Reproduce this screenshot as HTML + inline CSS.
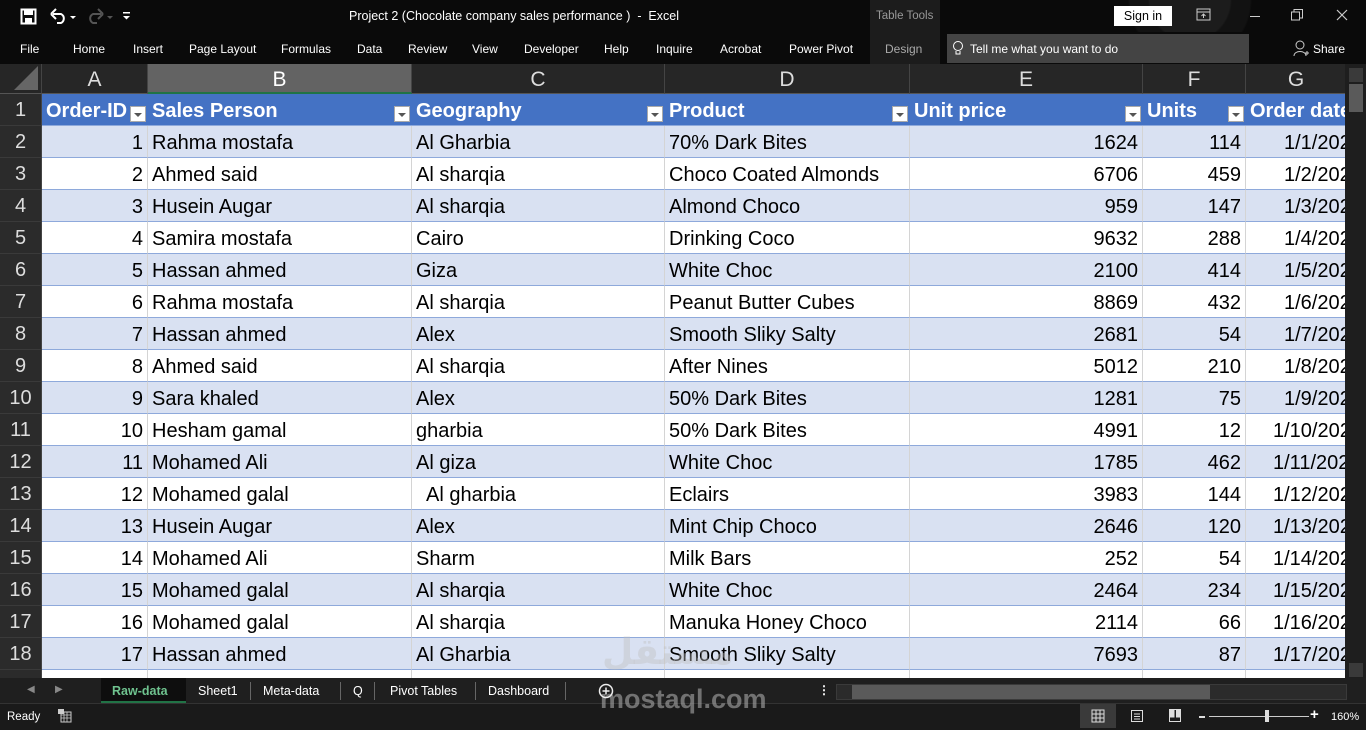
<!DOCTYPE html>
<html><head><meta charset="utf-8"><style>
*{margin:0;padding:0;box-sizing:border-box}
body{width:1366px;height:730px;overflow:hidden;background:#0a0a0a;font-family:"Liberation Sans",sans-serif;position:relative}
.a{position:absolute}
.t{color:#fff;font-size:12px;white-space:nowrap}
.row{position:absolute;left:0;height:32px;display:flex}
.row div{height:32px;padding:3px 4px 0;font-size:20px;color:#000;white-space:nowrap;overflow:hidden;border-bottom:1px solid #8ea9db;border-right:1px solid #d4d4d4;line-height:29px;position:relative;flex:none}
.row div.r{text-align:right}
.row div.rh{background:#2b2b2b!important;color:#ddd;text-align:center;border-right:1px solid #444;border-bottom:1px solid #3a3a3a;padding:2px 0 0;font-weight:normal}
.ch{top:64px;height:30px}
.ch div{background:#262626;color:#ddd;text-align:center;font-size:21px;height:30px;line-height:30px;padding:1px 0 0;border-bottom:1px solid #555;border-right:1px solid #444}
.ch div.sel{background:#636363;color:#fff;border-bottom:2px solid #217346}
.hd div{background:#4472c4;color:#fff;font-weight:bold;border-right:none}
.dd{position:absolute;right:2px;top:12px;width:16px;height:16px;background:#fff;border:1px solid #aaa}
.dd:after{content:"";position:absolute;left:3px;top:6px;border:4px solid transparent;border-top:4px solid #555}
.b div{background:#d9e1f2}
.w div{background:#fff}
.c0{width:42px}.c1{width:106px}.c2{width:264px}.c3{width:253px}.c4{width:245px}.c5{width:233px}.c6{width:103px}.c7{width:101px}
</style></head><body>
<!-- title bar -->
<div class="a" style="left:0;top:0;width:1366px;height:64px;background:#0a0a0a"></div>
<svg class="a" style="left:20px;top:8px" width="18" height="17"><rect x="1.5" y="1.5" width="14" height="14" fill="none" stroke="#fff" stroke-width="2"/><rect x="4" y="2" width="9" height="5" fill="#fff"/><rect x="5" y="10" width="7" height="5" fill="#fff"/></svg>
<svg class="a" style="left:50px;top:8px" width="30" height="17"><path d="M3 6 H11 A5 5 0 0 1 11 15 H7" fill="none" stroke="#fff" stroke-width="2"/><path d="M1 6 L6 1 M1 6 L6 11" stroke="#fff" stroke-width="2"/><path d="M20 8 h6 l-3 3z" fill="#fff"/></svg>
<svg class="a" style="left:86px;top:8px" width="30" height="17"><path d="M15 6 H7 A5 5 0 0 0 7 15 H11" fill="none" stroke="#555" stroke-width="2"/><path d="M17 6 L12 1 M17 6 L12 11" stroke="#555" stroke-width="2"/><path d="M21 8 h6 l-3 3z" fill="#555"/></svg>
<svg class="a" style="left:122px;top:10px" width="10" height="12"><rect x="1" y="2" width="7" height="1.5" fill="#fff"/><path d="M1 6 h7 l-3.5 3.5z" fill="#fff"/></svg>
<div class="a t" style="left:349px;top:9px;font-size:12.5px">Project 2 (Chocolate company sales performance )&nbsp; -&nbsp; Excel</div>
<div class="a" style="left:870px;top:0;width:70px;height:64px;background:#1c1c1c"></div>
<div class="a t" style="left:876px;top:10px;color:#999;font-size:11.5px">Table Tools</div>
<div class="a" style="left:950px;top:0;width:380px;height:32px;background:radial-gradient(circle at 240px 0px,#1c1c1c 40px,#121212 42px,#121212 60px,#0a0a0a 62px)"></div>
<div class="a" style="left:1114px;top:6px;width:58px;height:20px;background:#fff;color:#000;font-size:12.5px;text-align:center;line-height:20px">Sign in</div>
<svg class="a" style="left:1196px;top:8px" width="16" height="14"><rect x="1" y="1" width="13" height="11" fill="none" stroke="#ccc"/><path d="M1 4 h13 M7.5 10 V6 M5.5 8 l2-2 l2 2" stroke="#ccc" fill="none"/></svg>
<div class="a" style="left:1250px;top:16px;width:10px;height:1px;background:#ccc"></div>
<svg class="a" style="left:1291px;top:9px" width="12" height="12"><rect x="0.5" y="3" width="8" height="8" fill="none" stroke="#ccc"/><path d="M3 3 V0.5 H11.5 V9 H9" fill="none" stroke="#ccc"/></svg>
<svg class="a" style="left:1336px;top:9px" width="12" height="12"><path d="M1 1 L11 11 M11 1 L1 11" stroke="#ccc" stroke-width="1.2"/></svg>
<!-- ribbon -->
<div class="a t" style="left:20px;top:42px">File</div>
<div class="a t" style="left:73px;top:42px">Home</div>
<div class="a t" style="left:133px;top:42px">Insert</div>
<div class="a t" style="left:189px;top:42px">Page Layout</div>
<div class="a t" style="left:281px;top:42px">Formulas</div>
<div class="a t" style="left:357px;top:42px">Data</div>
<div class="a t" style="left:408px;top:42px">Review</div>
<div class="a t" style="left:472px;top:42px">View</div>
<div class="a t" style="left:524px;top:42px">Developer</div>
<div class="a t" style="left:604px;top:42px">Help</div>
<div class="a t" style="left:656px;top:42px">Inquire</div>
<div class="a t" style="left:720px;top:42px">Acrobat</div>
<div class="a t" style="left:789px;top:42px">Power Pivot</div>
<div class="a t" style="left:885px;top:42px;color:#aaa">Design</div>
<div class="a" style="left:947px;top:34px;width:302px;height:29px;background:#444"></div>
<svg class="a" style="left:952px;top:40px" width="12" height="17"><circle cx="6" cy="6" r="4.5" fill="none" stroke="#fff"/><path d="M4 11 v3 h4 v-3" fill="none" stroke="#fff"/></svg>
<div class="a t" style="left:970px;top:42px">Tell me what you want to do</div>
<svg class="a" style="left:1293px;top:40px" width="16" height="17"><circle cx="7" cy="5" r="4" fill="none" stroke="#ccc"/><path d="M1 16 C1 10 13 10 13 16 M12 13 h4 M14 11 v4" fill="none" stroke="#ccc"/></svg>
<div class="a t" style="left:1313px;top:42px">Share</div>
<!-- grid -->
<div class="row ch"><div class="c0" style="position:relative"><span style="position:absolute;right:3px;bottom:3px;width:0;height:0;border-left:24px solid transparent;border-bottom:24px solid #666"></span></div><div class="c1">A</div><div class="c2 sel">B</div><div class="c3">C</div><div class="c4">D</div><div class="c5">E</div><div class="c6">F</div><div class="c7">G</div></div>
<div class="row hd" style="top:94px"><div class="c0 rh">1</div><div class="c1">Order-ID<span class="dd"></span></div><div class="c2">Sales Person<span class="dd"></span></div><div class="c3">Geography<span class="dd"></span></div><div class="c4">Product<span class="dd"></span></div><div class="c5">Unit price<span class="dd"></span></div><div class="c6">Units<span class="dd"></span></div><div class="c7">Order date</div></div>
<div class="row b" style="top:126px"><div class="c0 rh">2</div><div class="c1 r">1</div><div class="c2">Rahma mostafa</div><div class="c3">Al Gharbia</div><div class="c4">70% Dark Bites</div><div class="c5 r">1624</div><div class="c6 r">114</div><div class="c7" style="padding-left:38px">1/1/2022</div></div>
<div class="row w" style="top:158px"><div class="c0 rh">3</div><div class="c1 r">2</div><div class="c2">Ahmed said</div><div class="c3">Al sharqia</div><div class="c4">Choco Coated Almonds</div><div class="c5 r">6706</div><div class="c6 r">459</div><div class="c7" style="padding-left:38px">1/2/2022</div></div>
<div class="row b" style="top:190px"><div class="c0 rh">4</div><div class="c1 r">3</div><div class="c2">Husein Augar</div><div class="c3">Al sharqia</div><div class="c4">Almond Choco</div><div class="c5 r">959</div><div class="c6 r">147</div><div class="c7" style="padding-left:38px">1/3/2022</div></div>
<div class="row w" style="top:222px"><div class="c0 rh">5</div><div class="c1 r">4</div><div class="c2">Samira mostafa</div><div class="c3">Cairo</div><div class="c4">Drinking Coco</div><div class="c5 r">9632</div><div class="c6 r">288</div><div class="c7" style="padding-left:38px">1/4/2022</div></div>
<div class="row b" style="top:254px"><div class="c0 rh">6</div><div class="c1 r">5</div><div class="c2">Hassan ahmed</div><div class="c3">Giza</div><div class="c4">White Choc</div><div class="c5 r">2100</div><div class="c6 r">414</div><div class="c7" style="padding-left:38px">1/5/2022</div></div>
<div class="row w" style="top:286px"><div class="c0 rh">7</div><div class="c1 r">6</div><div class="c2">Rahma mostafa</div><div class="c3">Al sharqia</div><div class="c4">Peanut Butter Cubes</div><div class="c5 r">8869</div><div class="c6 r">432</div><div class="c7" style="padding-left:38px">1/6/2022</div></div>
<div class="row b" style="top:318px"><div class="c0 rh">8</div><div class="c1 r">7</div><div class="c2">Hassan ahmed</div><div class="c3">Alex</div><div class="c4">Smooth Sliky Salty</div><div class="c5 r">2681</div><div class="c6 r">54</div><div class="c7" style="padding-left:38px">1/7/2022</div></div>
<div class="row w" style="top:350px"><div class="c0 rh">9</div><div class="c1 r">8</div><div class="c2">Ahmed said</div><div class="c3">Al sharqia</div><div class="c4">After Nines</div><div class="c5 r">5012</div><div class="c6 r">210</div><div class="c7" style="padding-left:38px">1/8/2022</div></div>
<div class="row b" style="top:382px"><div class="c0 rh">10</div><div class="c1 r">9</div><div class="c2">Sara khaled</div><div class="c3">Alex</div><div class="c4">50% Dark Bites</div><div class="c5 r">1281</div><div class="c6 r">75</div><div class="c7" style="padding-left:38px">1/9/2022</div></div>
<div class="row w" style="top:414px"><div class="c0 rh">11</div><div class="c1 r">10</div><div class="c2">Hesham gamal</div><div class="c3">gharbia</div><div class="c4">50% Dark Bites</div><div class="c5 r">4991</div><div class="c6 r">12</div><div class="c7" style="padding-left:27px">1/10/2022</div></div>
<div class="row b" style="top:446px"><div class="c0 rh">12</div><div class="c1 r">11</div><div class="c2">Mohamed Ali</div><div class="c3">Al giza</div><div class="c4">White Choc</div><div class="c5 r">1785</div><div class="c6 r">462</div><div class="c7" style="padding-left:27px">1/11/2022</div></div>
<div class="row w" style="top:478px"><div class="c0 rh">13</div><div class="c1 r">12</div><div class="c2">Mohamed galal</div><div class="c3" style="padding-left:14px">Al gharbia</div><div class="c4">Eclairs</div><div class="c5 r">3983</div><div class="c6 r">144</div><div class="c7" style="padding-left:27px">1/12/2022</div></div>
<div class="row b" style="top:510px"><div class="c0 rh">14</div><div class="c1 r">13</div><div class="c2">Husein Augar</div><div class="c3">Alex</div><div class="c4">Mint Chip Choco</div><div class="c5 r">2646</div><div class="c6 r">120</div><div class="c7" style="padding-left:27px">1/13/2022</div></div>
<div class="row w" style="top:542px"><div class="c0 rh">15</div><div class="c1 r">14</div><div class="c2">Mohamed Ali</div><div class="c3">Sharm</div><div class="c4">Milk Bars</div><div class="c5 r">252</div><div class="c6 r">54</div><div class="c7" style="padding-left:27px">1/14/2022</div></div>
<div class="row b" style="top:574px"><div class="c0 rh">16</div><div class="c1 r">15</div><div class="c2">Mohamed galal</div><div class="c3">Al sharqia</div><div class="c4">White Choc</div><div class="c5 r">2464</div><div class="c6 r">234</div><div class="c7" style="padding-left:27px">1/15/2022</div></div>
<div class="row w" style="top:606px"><div class="c0 rh">17</div><div class="c1 r">16</div><div class="c2">Mohamed galal</div><div class="c3">Al sharqia</div><div class="c4">Manuka Honey Choco</div><div class="c5 r">2114</div><div class="c6 r">66</div><div class="c7" style="padding-left:27px">1/16/2022</div></div>
<div class="row b" style="top:638px"><div class="c0 rh">18</div><div class="c1 r">17</div><div class="c2">Hassan ahmed</div><div class="c3">Al Gharbia</div><div class="c4">Smooth Sliky Salty</div><div class="c5 r">7693</div><div class="c6 r">87</div><div class="c7" style="padding-left:27px">1/17/2022</div></div>
<div class="row w" style="top:670px"><div class="c0 rh"></div><div class="c1"></div><div class="c2"></div><div class="c3"></div><div class="c4"></div><div class="c5"></div><div class="c6"></div><div class="c7"></div></div>
<!-- vertical scrollbar -->
<div class="a" style="left:1345px;top:64px;width:21px;height:614px;background:#1e1e1e"></div>
<div class="a" style="left:1349px;top:68px;width:14px;height:14px;background:#3a3a3a"></div>
<div class="a" style="left:1349px;top:84px;width:14px;height:28px;background:#5a5a5a"></div>
<div class="a" style="left:1349px;top:663px;width:14px;height:14px;background:#3a3a3a"></div>
<!-- sheet tabs -->
<div class="a" style="left:0;top:678px;width:1366px;height:26px;background:#1f1f1f;border-bottom:1px solid #333"></div>
<div class="a t" style="left:27px;top:684px;color:#888;font-size:10px">◀</div>
<div class="a t" style="left:55px;top:684px;color:#888;font-size:10px">▶</div>
<div class="a" style="left:101px;top:678px;width:85px;height:25px;background:#0e0e0e;border-bottom:2px solid #217346"></div>
<div class="a t" style="left:112px;top:684px;color:#6fc38f;font-weight:bold;font-size:12.5px">Raw-data</div>
<div class="a t" style="left:198px;top:684px;font-size:12.5px">Sheet1</div>
<div class="a" style="left:250px;top:682px;width:1px;height:18px;background:#666"></div>
<div class="a t" style="left:263px;top:684px;font-size:12.5px">Meta-data</div>
<div class="a" style="left:340px;top:682px;width:1px;height:18px;background:#666"></div>
<div class="a t" style="left:353px;top:684px;font-size:12.5px">Q</div>
<div class="a" style="left:374px;top:682px;width:1px;height:18px;background:#666"></div>
<div class="a t" style="left:390px;top:684px;font-size:12.5px">Pivot Tables</div>
<div class="a" style="left:475px;top:682px;width:1px;height:18px;background:#666"></div>
<div class="a t" style="left:488px;top:684px;font-size:12.5px">Dashboard</div>
<div class="a" style="left:565px;top:682px;width:1px;height:18px;background:#666"></div>
<div class="a t" style="left:818px;top:683px;font-weight:bold">⋮</div>
<div class="a" style="left:836px;top:684px;width:511px;height:16px;background:#2b2b2b;border:1px solid #3a3a3a"></div>
<div class="a" style="left:852px;top:685px;width:358px;height:14px;background:#5a5a5a"></div>
<!-- status bar -->
<div class="a" style="left:0;top:704px;width:1366px;height:26px;background:#1a1a1a"></div>
<div class="a t" style="left:7px;top:711px;font-size:11.5px">Ready</div>
<svg class="a" style="left:58px;top:709px" width="14" height="14"><rect x="3" y="3" width="10" height="10" fill="none" stroke="#ccc"/><path d="M3 6h10M3 9h10M6 3v10M9 3v10" stroke="#ccc" stroke-width=".8"/><rect x="0" y="0" width="6" height="5" fill="#ccc"/></svg>
<div class="a" style="left:1080px;top:704px;width:36px;height:24px;background:#3a3a3a"></div>
<svg class="a" style="left:1091px;top:709px" width="14" height="14"><rect x="1" y="1" width="12" height="12" fill="none" stroke="#ddd"/><path d="M1 5h12M1 9h12M5 1v12M9 1v12" stroke="#ddd"/></svg>
<svg class="a" style="left:1130px;top:709px" width="14" height="14"><rect x="1.5" y="1.5" width="11" height="11" fill="none" stroke="#ddd"/><path d="M4 5h6M4 7.5h6M4 10h6" stroke="#ddd"/></svg>
<svg class="a" style="left:1168px;top:708px" width="14" height="16"><rect x="1.5" y="1.5" width="11" height="12" fill="none" stroke="#ddd"/><rect x="1.5" y="1.5" width="5" height="8" fill="#ddd"/><rect x="8" y="1.5" width="4.5" height="8" fill="#ddd"/></svg>
<div class="a" style="left:1199px;top:716px;width:6px;height:2px;background:#ddd"></div>
<div class="a" style="left:1209px;top:716px;width:100px;height:1px;background:#ccc"></div>
<div class="a" style="left:1265px;top:710px;width:4px;height:12px;background:#ddd"></div>
<div class="a t" style="left:1310px;top:706px;font-size:15px;font-weight:bold">+</div>
<div class="a t" style="left:1331px;top:711px;font-size:11px">160%</div>
<!-- watermark -->
<div class="a" style="left:602px;top:632px;font-size:36px;color:rgba(190,190,190,.4);font-family:'DejaVu Sans',sans-serif;font-weight:bold">مستقل</div>
<div class="a" style="left:600px;top:684px;font-size:27px;color:rgba(170,170,170,.6);font-weight:bold">mostaql.com</div>
<svg class="a" style="left:598px;top:683px" width="16" height="16"><circle cx="8" cy="8" r="6.5" fill="none" stroke="#eee" stroke-width="1.5"/><path d="M8 4.5 v7 M4.5 8 h7" stroke="#eee" stroke-width="1.5"/></svg>
</body></html>
